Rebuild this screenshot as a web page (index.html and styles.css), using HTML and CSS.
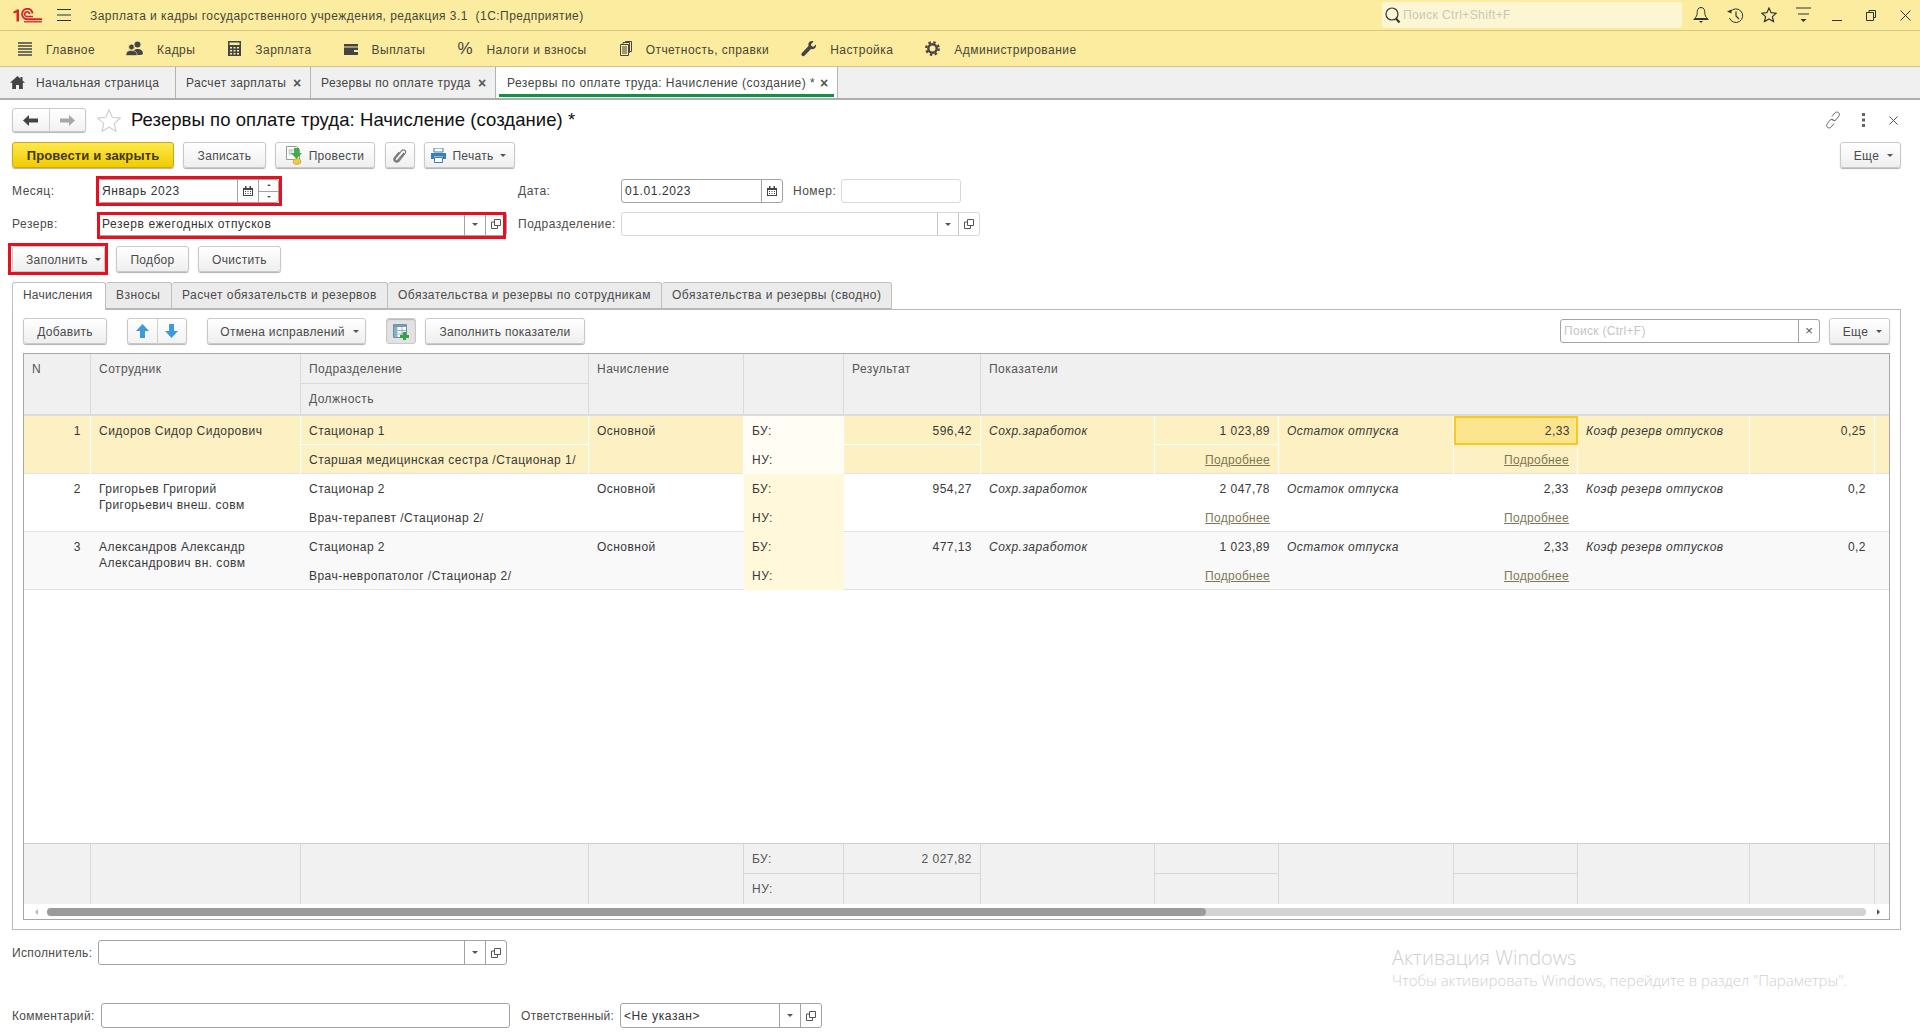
FILE: index.html
```html
<!DOCTYPE html>
<html lang="ru">
<head>
<meta charset="utf-8">
<title>Резервы по оплате труда</title>
<link rel="stylesheet" href="styles.css">
</head>
<body>
<svg class="defs" width="0" height="0">
  <symbol id="i-open" viewBox="0 0 10 10"><path d="M3.5 .5h6v6h-6zM3.5 3H.5v6.5h6V6.5" fill="none" stroke="currentColor"/></symbol>
  <symbol id="i-cal" viewBox="0 0 10 10"><path d="M0 2h10v8H0zM2 0h1.5v3H2zM6.500 0H8v3H6.500z" fill="#444"/><path d="M1 4h8v5H1z" fill="#fff"/><path d="M2 5h1v1H2zM4.500 5h1v1h-1zM7 5h1v1H7zM2 7h1v1H2zM4.500 7h1v1h-1zM7 7h1v1H7z" fill="#444"/></symbol>
</svg>

<header class="titlebar">
  <svg class="logo" width="30" height="15" viewBox="0 0 30 15"><path d="M0 4 4 1.500h2V13.500H3.500V4.500L1 5.500z" fill="#d8232a"/><path d="M19.500 5.500A5.200 5.200 0 1 0 14 11.200H29" fill="none" stroke="#d8232a" stroke-width="2"/><path d="M16.500 6.200A2.400 2.400 0 1 0 14 8.600H20" fill="none" stroke="#d8232a" stroke-width="1.500"/><path d="M11 13.800H29" stroke="#d8232a" stroke-width="1.300"/></svg>
  <svg class="burger" width="14" height="12" viewBox="0 0 14 12"><path d="M0 .5h14M0 6h14M0 11.500h14" stroke="#333" stroke-width="1"/></svg>
  <span class="app-title">Зарплата и кадры государственного учреждения, редакция 3.1&nbsp; (1С:Предприятие)</span>
  <div class="global-search">
    <svg width="16" height="17" viewBox="0 0 16 17"><circle cx="7" cy="7" r="6" fill="none" stroke="#333" stroke-width="1.200"/><path d="M11 11.500l3.500 4" stroke="#333" stroke-width="2"/></svg>
    <span>Поиск Ctrl+Shift+F</span>
  </div>
  <div class="sys-icons">
    <svg width="16" height="18" viewBox="0 0 16 18"><path d="M8 1.500c-3 0-3.800 2.500-3.800 5 0 3-1 4.500-2.700 6h13c-1.700-1.500-2.700-3-2.700-6 0-2.500-.8-5-3.800-5z" fill="none" stroke="#333"/><path d="M.5 13.500h15" stroke="#333"/><path d="M6 15h4l-2 2z" fill="#333"/></svg>
    <svg width="17" height="17" viewBox="0 0 17 17"><path d="M3.200 5A6.800 6.800 0 1 1 2.500 11" fill="none" stroke="#333"/><path d="M0 4.500l4.500-2v4z" fill="#333"/><path d="M9 4.500V9l3 3" fill="none" stroke="#333" stroke-width="1.200"/></svg>
    <svg width="16" height="16" viewBox="0 0 16 16"><path d="M8 1l2.100 4.700 5.100.5-3.800 3.400 1.100 5L8 12l-4.500 2.600 1.100-5L.8 6.200l5.100-.5z" fill="none" stroke="#333" stroke-width="1.200"/></svg>
    <svg width="15" height="16" viewBox="0 0 15 16"><path d="M0 1h15M2 7h11" stroke="#333"/><path d="M4.500 12h6l-3 3z" fill="#333"/></svg>
    <svg width="10" height="16" viewBox="0 0 10 16"><path d="M0 13.500h10" stroke="#333"/></svg>
    <svg width="10" height="11" viewBox="0 0 10 11"><path d="M3 2.500V.5h6.500v7H7.500M.5 2.500h7v8h-7z" fill="none" stroke="#333"/></svg>
    <svg width="11" height="11" viewBox="0 0 11 11"><path d="M.5.500l10 10M10.500.500l-10 10" stroke="#333"/></svg>
  </div>
</header>

<nav class="menubar">
  <a class="menu-item mi-main"><svg width="14" height="14" viewBox="0 0 14 14"><path d="M0 1h14M0 4h14M0 7h14M0 10h14M0 13h14" stroke="#444" stroke-width="1.600"/></svg><span>Главное</span></a>
  <a class="menu-item mi-staff"><svg width="17" height="15" viewBox="0 0 17 15"><circle cx="11.500" cy="3.500" r="3" fill="#444"/><path d="M7 14c0-4 1-6 4.500-6S17 10 17 13l-2 1z" fill="#444"/><circle cx="5.500" cy="6" r="2.800" fill="#444" stroke="#fbeca0" stroke-width=".6"/><path d="M0 14.500c0-3 1-5 5.500-5s5.500 2 5.500 5z" fill="#444" stroke="#fbeca0" stroke-width=".6"/></svg><span>Кадры</span></a>
  <a class="menu-item mi-pay"><svg width="13" height="15" viewBox="0 0 13 15"><path d="M0 0h13v15H0z" fill="#444"/><path d="M1.500 1.500h10v2.500h-10zM2 6h2v1.500H2zM5.500 6h2v1.500h-2zM9 6h2v1.500H9zM2 9h2v1.500H2zM5.500 9h2v1.500h-2zM9 9h2v1.500H9zM2 12h2v1.500H2zM5.500 12h2v1.500h-2zM9 12h2v1.500H9z" fill="#fbeca0"/></svg><span>Зарплата</span></a>
  <a class="menu-item mi-out"><svg width="14" height="12" viewBox="0 0 14 12"><path d="M0 1h14v2.500H0zM0 4.500h14V12H0z" fill="#444"/><path d="M10 7h4v2h-4z" fill="#fbeca0"/></svg><span>Выплаты</span></a>
  <a class="menu-item mi-tax"><b class="pct">%</b><span>Налоги и взносы</span></a>
  <a class="menu-item mi-rep"><svg width="12" height="15" viewBox="0 0 12 15"><path d="M.5 3.500h8v11h-8zM3 3V1.500h6.500v10H9M5.500 1V.5h6v10H10" fill="none" stroke="#444"/><path d="M2 6h5M2 8h5M2 10h5M2 12h5" stroke="#444"/></svg><span>Отчетность, справки</span></a>
  <a class="menu-item mi-set"><svg width="15" height="16" viewBox="0 0 15 16"><path d="M15 3.500l-2.500 2.300-2-.5-.5-2L12.500.5C10.500-.5 8 .5 7.500 2.500c-.3 1 0 2 0 2.500L.7 12.300c-.9 1 0 3 1.800 2.900.5 0 1-.3 1.200-.7L10 8c1 .3 2.500.2 3.500-.5 1.300-1 1.800-2.500 1.500-4z" fill="#444"/></svg><span>Настройка</span></a>
  <a class="menu-item mi-adm"><svg width="15" height="15" viewBox="0 0 15 15"><circle cx="7.500" cy="7.500" r="4.200" fill="none" stroke="#444" stroke-width="2.400"/><circle cx="7.500" cy="7.500" r="6.300" fill="none" stroke="#444" stroke-width="2.200" stroke-dasharray="2.500 2.450"/></svg><span>Администрирование</span></a>
</nav>

<div class="tabbar">
  <a class="wtab wtab-home"><svg width="15" height="13" viewBox="0 0 15 13"><path d="M7.500 0L0 6.800h2.200V13h3.800V9h3v4h3.800V6.800H15L12.500 4.500V1h-2v1.700z" fill="#444"/></svg><span>Начальная страница</span></a>
  <a class="wtab wtab-pay"><span>Расчет зарплаты</span><i class="x">×</i></a>
  <a class="wtab wtab-res"><span>Резервы по оплате труда</span><i class="x">×</i></a>
  <a class="wtab wtab-active"><span>Резервы по оплате труда: Начисление (создание) *</span><i class="x">×</i></a>
</div>

<main class="form">
  <div class="form-head">
    <div class="nav-pair">
      <button class="seg"><svg width="15" height="11" viewBox="0 0 15 11"><path d="M6 0L0 5.500 6 11V7.500h9v-4H6z" fill="#444"/></svg></button>
      <button class="seg"><svg width="15" height="11" viewBox="0 0 15 11"><path d="M9 0l6 5.500L9 11V7.500H0v-4h9z" fill="#a8a8a8"/></svg></button>
    </div>
    <svg class="fav" width="24" height="23" viewBox="0 0 24 23"><path d="M12 1l3.300 7.300 7.900.8-5.900 5.300 1.700 7.800L12 18.200 5 22.200l1.700-7.800L.8 9.100l7.900-.8z" fill="#fff" stroke="#cfcfcf" stroke-width="1.200"/></svg>
    <h1 class="doc-title">Резервы по оплате труда: Начисление (создание) *</h1>
    <div class="head-tools">
      <svg width="16" height="18" viewBox="0 0 16 18"><path d="M7 5.500l3-3.700c1.500-1.700 5-.3 4.300 2.300-.2.700-.6 1.300-1 1.800L11 8.800c-1.300 1.500-3.800 1-4.200-.8M9 12.500l-3 3.700C4.500 17.900 1 16.500 1.700 13.900c.2-.7.600-1.300 1-1.800L5 9.200c1.300-1.500 3.800-1 4.200.8" fill="none" stroke="#666"/></svg>
      <svg width="3" height="14" viewBox="0 0 3 14"><path d="M0 0h3v3H0zM0 5.500h3v3H0zM0 11h3v3H0z" fill="#666"/></svg>
      <svg width="9" height="9" viewBox="0 0 9 9"><path d="M.5.500l8 8M8.500.500l-8 8" stroke="#555"/></svg>
    </div>
  </div>

  <div class="cmdbar">
    <button class="btn btn-primary w-post-close">Провести и закрыть</button>
    <button class="btn w-save">Записать</button>
    <button class="btn w-post">
      <svg width="18" height="19" viewBox="0 0 18 19"><path d="M.5 .5h10l3 3v10H.5z" fill="#fff" stroke="#9a9a9a"/><path d="M2.500 4h5M2.500 6h4M2.500 8h4" stroke="#aaa"/><ellipse cx="11" cy="15.500" rx="4" ry="3" fill="#f2c64a" stroke="#c99a20" stroke-width=".6"/><path d="M8 2h5v5h3l-5.500 6L5 7h3z" fill="#3fae49"/></svg>
      Провести
    </button>
    <button class="btn w-clip"><svg width="14" height="16" viewBox="0 0 14 16"><path d="M11 5L5 12c-1.500 1.700-4 0-2.500-2l6-7.200c2-2.200 5.500 0 3.500 2.700L6 13c-2.500 2.800-6.800-.2-4.500-3.300L6 4" fill="none" stroke="#777" stroke-width="1.200"/></svg></button>
    <button class="btn w-print">
      <svg width="15" height="15" viewBox="0 0 15 15"><path d="M3 0h9v4H3z" fill="#fff" stroke="#3c7fb5"/><path d="M0 5h15v6h-3V8.500H3V11H0z" fill="#3c7fb5"/><path d="M3.500 9.500h8v5h-8z" fill="#fff" stroke="#3c7fb5"/></svg>
      Печать<i class="caret"></i>
    </button>
    <button class="btn w-more push-right">Еще<i class="caret"></i></button>
  </div>

  <div class="form-grid">
    <label class="lbl">Месяц:</label>
    <div class="field f-month">
      <span class="ftext">Январь 2023</span>
      <span class="fbtn"><svg class="ic-cal" width="10" height="10"><use href="#i-cal"/></svg></span>
      <span class="spin"><i class="up"></i><i class="down"></i></span>
      <span class="mark mark-month"></span>
    </div>
    <label class="lbl lbl-side">Дата:</label>
    <div class="side-pair">
      <div class="field f-date">
        <span class="ftext">01.01.2023</span>
        <span class="fbtn"><svg class="ic-cal" width="10" height="10"><use href="#i-cal"/></svg></span>
      </div>
      <label class="lbl lbl-num">Номер:</label>
      <div class="field field-off f-num"></div>
    </div>

    <label class="lbl">Резерв:</label>
    <div class="field">
      <span class="ftext">Резерв ежегодных отпусков</span>
      <span class="fbtn"><i class="caret"></i></span>
      <span class="fbtn"><svg class="ic-open" width="10" height="10"><use href="#i-open"/></svg></span>
      <span class="mark mark-reserve"></span>
    </div>
    <label class="lbl lbl-side">Подразделение:</label>
    <div class="field field-off">
      <span class="ftext"></span>
      <span class="fbtn"><i class="caret"></i></span>
      <span class="fbtn"><svg class="ic-open" width="10" height="10"><use href="#i-open"/></svg></span>
    </div>
  </div>

  <div class="fillbar">
    <button class="btn w-fill">Заполнить<i class="caret"></i><span class="mark mark-fill"></span></button>
    <button class="btn w-pick">Подбор</button>
    <button class="btn w-clear">Очистить</button>
  </div>

  <div class="ptabs">
    <a class="ptab ptab-active">Начисления</a>
    <a class="ptab">Взносы</a>
    <a class="ptab">Расчет обязательств и резервов</a>
    <a class="ptab">Обязательства и резервы по сотрудникам</a>
    <a class="ptab">Обязательства и резервы (сводно)</a>
  </div>

  <section class="panel">
    <div class="toolbar">
      <button class="btn w-add">Добавить</button>
      <div class="btn-pair">
        <button class="seg"><svg width="13" height="14" viewBox="0 0 13 14"><path d="M6.500 0L13 7H9v7H4V7H0z" fill="#3d9bdc"/></svg></button>
        <button class="seg"><svg width="13" height="14" viewBox="0 0 13 14"><path d="M6.500 14L13 7H9V0H4v7H0z" fill="#3d9bdc"/></svg></button>
      </div>
      <button class="btn w-undo">Отмена исправлений<i class="caret"></i></button>
      <button class="btn btn-down w-grid"><svg width="17" height="16" viewBox="0 0 17 16"><path d="M.5 .5h13v13H.5z" fill="#fff" stroke="#6b8e9e"/><path d="M1 1h3.500v12H1z" fill="#7fb2d0"/><path d="M1 .5h12.500v2.500H1z" fill="#6f9fb8"/><path d="M9 3v10M5 6.500h8M5 10h8" stroke="#9ab"/><path d="M10 8h3v3h3v3h-3v2h-3v-2H7v-3h3z" fill="#35a33f"/></svg></button>
      <button class="btn w-fillind">Заполнить показатели</button>
      <div class="field search push-right">
        <span class="ftext ph">Поиск (Ctrl+F)</span>
        <span class="fbtn fbtn-x">×</span>
      </div>
      <button class="btn w-more">Еще<i class="caret"></i></button>
    </div>

    <div class="tbl">
      <div class="thead cols">
        <div class="h span2">N</div>
        <div class="h span2">Сотрудник</div>
        <div class="h split">Подразделение</div>
        <div class="h span2">Начисление</div>
        <div class="h span2"></div>
        <div class="h span2">Результат</div>
        <div class="h span2 wide">Показатели</div>
        <div class="h">Должность</div>
      </div>

      <div class="trow cols sel">
        <div class="c span2 num">1</div>
        <div class="c span2">Сидоров Сидор Сидорович</div>
        <div class="c split">Стационар 1</div>
        <div class="c span2">Основной</div>
        <div class="c bu">БУ:</div>
        <div class="c split r">596,42</div>
        <div class="c span2 it">Сохр.заработок</div>
        <div class="c split r">1 023,89</div>
        <div class="c span2 it">Остаток отпуска</div>
        <div class="c split r cur">2,33</div>
        <div class="c span2 it">Коэф резерв отпусков</div>
        <div class="c span2 r">0,25</div>
        <div class="c span2 end"></div>
        <div class="c">Старшая медицинская сестра /Стационар 1/</div>
        <div class="c bu">НУ:</div>
        <div class="c"></div>
        <div class="c r"><a class="more">Подробнее</a></div>
        <div class="c r"><a class="more">Подробнее</a></div>
      </div>

      <div class="trow cols">
        <div class="c span2 num">2</div>
        <div class="c span2">Григорьев Григорий<br>Григорьевич внеш. совм</div>
        <div class="c">Стационар 2</div>
        <div class="c span2">Основной</div>
        <div class="c bu">БУ:</div>
        <div class="c r">954,27</div>
        <div class="c span2 it">Сохр.заработок</div>
        <div class="c r">2 047,78</div>
        <div class="c span2 it">Остаток отпуска</div>
        <div class="c r">2,33</div>
        <div class="c span2 it">Коэф резерв отпусков</div>
        <div class="c span2 r">0,2</div>
        <div class="c span2 end"></div>
        <div class="c">Врач-терапевт /Стационар 2/</div>
        <div class="c bu">НУ:</div>
        <div class="c"></div>
        <div class="c r"><a class="more">Подробнее</a></div>
        <div class="c r"><a class="more">Подробнее</a></div>
      </div>

      <div class="trow cols alt">
        <div class="c span2 num">3</div>
        <div class="c span2">Александров Александр<br>Александрович вн. совм</div>
        <div class="c">Стационар 2</div>
        <div class="c span2">Основной</div>
        <div class="c bu">БУ:</div>
        <div class="c r">477,13</div>
        <div class="c span2 it">Сохр.заработок</div>
        <div class="c r">1 023,89</div>
        <div class="c span2 it">Остаток отпуска</div>
        <div class="c r">2,33</div>
        <div class="c span2 it">Коэф резерв отпусков</div>
        <div class="c span2 r">0,2</div>
        <div class="c span2 end"></div>
        <div class="c">Врач-невропатолог /Стационар 2/</div>
        <div class="c bu">НУ:</div>
        <div class="c"></div>
        <div class="c r"><a class="more">Подробнее</a></div>
        <div class="c r"><a class="more">Подробнее</a></div>
      </div>

      <div class="tspace"></div>

      <div class="tfoot cols">
        <div class="f span2"></div>
        <div class="f span2"></div>
        <div class="f span2"></div>
        <div class="f span2"></div>
        <div class="f split">БУ:</div>
        <div class="f split r">2 027,82</div>
        <div class="f span2"></div>
        <div class="f split"></div>
        <div class="f span2"></div>
        <div class="f split"></div>
        <div class="f span2"></div>
        <div class="f span2"></div>
        <div class="f span2 end"></div>
        <div class="f">НУ:</div>
        <div class="f"></div>
        <div class="f"></div>
        <div class="f"></div>
      </div>

      <div class="hscroll">
        <i class="arr arr-l"></i>
        <div class="track"><div class="thumb"></div></div>
        <i class="arr arr-r"></i>
      </div>
    </div>
  </section>

  <div class="bottom-row exec-row">
    <label class="lbl">Исполнитель:</label>
    <div class="field f-wide">
      <span class="ftext"></span>
      <span class="fbtn"><i class="caret"></i></span>
      <span class="fbtn"><svg class="ic-open" width="10" height="10"><use href="#i-open"/></svg></span>
    </div>
  </div>

  <div class="bottom-row comment-row">
    <label class="lbl lbl-comment">Комментарий:</label>
    <div class="field f-comment"></div>
    <label class="lbl lbl-resp">Ответственный:</label>
    <div class="field f-resp">
      <span class="ftext">&lt;Не указан&gt;</span>
      <span class="fbtn"><i class="caret"></i></span>
      <span class="fbtn"><svg class="ic-open" width="10" height="10"><use href="#i-open"/></svg></span>
    </div>
  </div>
</main>

<aside class="watermark">
  <div class="wm-1">Активация Windows</div>
  <div class="wm-2">Чтобы активировать Windows, перейдите в раздел "Параметры".</div>
</aside>
</body>
</html>
```

FILE: styles.css
```css
* { box-sizing: border-box; }
html, body { margin: 0; height: 100%; }
body {
  width: 1920px; height: 1036px; overflow: hidden; position: relative;
  background: #fff; color: #444;
  font: 12px/16px "Liberation Sans", Arial, sans-serif;
  display: flex; flex-direction: column;
}
.defs { position: absolute; }
button { font: inherit; color: inherit; margin: 0; }
svg { display: block; flex: none; }

/* title bar */
.titlebar {
  height: 31px; flex: none; background: #fbeca0; border-bottom: 1px solid #d5c77f;
  display: flex; align-items: center; padding-left: 13px;
}
.burger { margin-left: 14px; }
.app-title { margin-left: 19px; padding-top: 2px; color: #4a4636; letter-spacing: .47px; white-space: nowrap; }
.global-search {
  margin-left: auto; width: 300px; height: 26px; background: #fdf6d2; border-radius: 3px;
  display: flex; align-items: center; padding-left: 3px; gap: 2px; color: #c9c6c0; letter-spacing: .4px;
}
.sys-icons {
  width: 238px; margin-right: -2px; margin-left: 2px;
  display: grid; grid-template-columns: repeat(7, 34px); justify-items: center; align-items: center;
}

/* menu */
.menubar {
  height: 36px; flex: none; background: #fbeca0; border-bottom: 1px solid #d0c48a;
  display: flex; align-items: center; padding-left: 18px;
}
.menu-item { display: flex; align-items: center; color: #4a4636; letter-spacing: .46px; white-space: nowrap; }
.menu-item span { padding-top: 2px; }
.menu-item svg, .pct { margin-right: 14px; }
.mi-main { margin-right: 31px; }
.mi-staff { margin-right: 33px; }
.mi-pay { margin-right: 32px; }
.mi-out { margin-right: 32px; }
.mi-tax { margin-right: 33px; }
.mi-rep { margin-right: 32px; }
.mi-set { margin-right: 32px; }
.pct { font-size: 17px; font-weight: 400; width: 15px; color: #444; letter-spacing: 0; }

/* window tabs */
.tabbar {
  height: 33px; flex: none; background: #f0f0f0; border-bottom: 2px solid #aeaeae;
  display: flex; align-items: stretch;
}
.wtab {
  display: flex; align-items: center; justify-content: space-between; padding: 0 8px 0 10px; border-right: 1px solid #b4b4b4;
  color: #444; white-space: nowrap; letter-spacing: .4px; flex: none;
}
.wtab span { padding-top: 1px; }
.wtab-home { width: 176px; justify-content: flex-start; }
.wtab-home svg { margin-right: 11px; }
.wtab-pay { width: 135px; }
.wtab-res { width: 185px; }
.x { font-style: normal; font-weight: 700; font-size: 14px; color: #555; width: 10px; text-align: center; letter-spacing: 0; }
.wtab-active { width: 342px; padding-left: 11px; background: #fff; position: relative; letter-spacing: .46px; }
.wtab-active::after { content: ""; position: absolute; left: 3px; right: 3px; bottom: 1px; height: 3px; background: #0e9248; }

/* form */
.form { flex: 1; padding: 8px 19px 0 12px; min-height: 0; }
.form-head { height: 24px; display: flex; align-items: center; }
.nav-pair, .btn-pair {
  display: flex; height: 24px; border: 1px solid #c8c8c8; border-radius: 3px;
  box-shadow: 0 1px 1px #b5b5b5; background: linear-gradient(#fff, #f2f2f2);
}
.nav-pair { width: 74px; }
.seg { flex: 1; border: 0; background: none; padding: 0; display: flex; align-items: center; justify-content: center; }
.seg + .seg { border-left: 1px solid #d0d0d0; }
.fav { margin-left: 11px; }
.doc-title { margin: 0 0 0 10px; font-size: 18.5px; font-weight: 400; line-height: 24px; color: #111; white-space: nowrap; letter-spacing: .07px; }
.head-tools {
  margin-left: auto; margin-right: -7px; width: 90px;
  display: grid; grid-template-columns: repeat(3, 30px); justify-items: center; align-items: center;
}

.btn {
  height: 26px; padding: 1px 0 0; display: inline-flex; align-items: center; justify-content: center; position: relative;
  border: 1px solid #c9c9c9; border-radius: 3px; background: linear-gradient(#fff, #efefef);
  box-shadow: 0 1px 1px #b0b0b0; color: #4a4a4a; white-space: nowrap; letter-spacing: .32px; flex: none;
}
.btn-primary { background: linear-gradient(#fde84e, #f2cc00); border-color: #c8ab14; color: #42390a; font-weight: 700; font-size: 13px; letter-spacing: .12px; }
.btn-down { background: #e2e2e2; box-shadow: inset 0 1px 1px #bbb; }
.caret { display: inline-block; width: 0; height: 0; border: 3px solid transparent; border-top: 3px solid #555; border-bottom: 0; margin-left: 8px; }
.push-right { margin-left: auto; }

.cmdbar { margin-top: 10px; display: flex; height: 26px; }
.w-post-close { width: 162px; margin-right: 9px; }
.w-save { width: 83px; margin-right: 9px; }
.w-post { width: 100px; margin-right: 10px; gap: 5px; }
.w-clip { width: 30px; margin-right: 9px; }
.w-print { width: 91px; gap: 6px; padding-right: 2px; }
.w-print .caret { margin-left: 0; }
.w-more { width: 61px; padding-left: 6px; }

.form-grid {
  margin-top: 11px; display: grid; grid-template-columns: 86px 409px 114px 359px;
  grid-auto-rows: 24px; row-gap: 9px; align-items: stretch;
}
.lbl { display: flex; align-items: center; color: #4a4a4a; letter-spacing: .5px; white-space: nowrap; }
.lbl-side { padding-left: 11px; }
.field {
  position: relative; display: flex; align-items: stretch; height: 24px; background: #fff;
  border: 1px solid #a3a3a3; border-radius: 3px; color: #333;
}
.field-off { border-color: #d8d8d8; }
.ftext { flex: 1; padding-left: 3px; display: flex; align-items: center; white-space: nowrap; letter-spacing: .6px; }
.fbtn { flex: none; width: 21px; border-left: 1px solid #a3a3a3; display: flex; align-items: center; justify-content: center; color: #555; }
.field-off .fbtn { border-left-color: #c4c4c4; }
.fbtn .caret { margin-left: 0; }
.spin { flex: none; width: 20px; border-left: 1px solid #a3a3a3; display: flex; flex-direction: column; }
.spin i { flex: 1; display: flex; align-items: center; justify-content: center; }
.spin .up { border-bottom: 1px solid #a3a3a3; }
.spin .up::before { content: ""; border: 2px solid transparent; border-top: 0; border-bottom: 2px solid #555; }
.spin .down::before { content: ""; border: 2px solid transparent; border-bottom: 0; border-top: 2px solid #555; }
.f-month { width: 181px; }
.side-pair { display: flex; align-items: stretch; }
.f-date { width: 162px; }
.f-num { width: 120px; }
.lbl-num { width: 58px; padding-left: 10px; }
.mark { position: absolute; border: 3px solid #e8101f; pointer-events: none; }
.mark-month { left: -3px; top: -4px; right: -4px; bottom: -4px; }
.mark-reserve { left: -2px; top: -1px; right: 0; bottom: -4px; }
.mark-fill { left: -5px; top: -4px; right: -4px; bottom: -4px; }

.fillbar { margin-top: 10px; display: flex; height: 26px; }
.w-fill { width: 93px; margin-right: 11px; justify-content: flex-start; padding-left: 13px; }
.w-fill .caret { margin-left: 7px; }
.w-pick { width: 73px; margin-right: 9px; }
.w-clear { width: 83px; }

.ptabs { margin-top: 10px; height: 27px; display: flex; position: relative; z-index: 1; }
.ptab {
  height: 27px; padding: 0 10px 2px; border: 1px solid #c0c0c0; border-left: 0; border-bottom: 1px solid #b5b5b5; border-radius: 3px 3px 0 0;
  background: #ebebeb; color: #4a4a4a; display: flex; align-items: center; white-space: nowrap; letter-spacing: .48px; flex: none;
}
.ptab:nth-child(1) { width: 94px; border-left: 1px solid #c0c0c0; }
.ptab:nth-child(2) { width: 66px; }
.ptab:nth-child(3) { width: 216px; }
.ptab:nth-child(4) { width: 274px; }
.ptab:nth-child(5) { width: 230px; }
.ptab-active { background: #fff; height: 28px; border-bottom: 0; letter-spacing: .2px; padding-bottom: 3px; }

.panel {
  border: 1px solid #b9b9b9; height: 621px; padding: 8px 10px 9px 10px; display: flex; flex-direction: column;
}
.toolbar { height: 26px; flex: none; display: flex; align-items: center; }
.w-add { width: 84px; margin-right: 20px; }
.btn-pair { width: 60px; height: 26px; margin-right: 20px; }
.w-undo { width: 159px; margin-right: 20px; padding-left: 6px; }
.w-grid { width: 30px; margin-right: 9px; }
.w-fillind { width: 160px; }
.search { width: 260px; margin-right: 9px; }
.ph { color: #c5c5c5; letter-spacing: .3px; }
.fbtn-x { font-size: 13px; }

.tbl {
  margin-top: 9px; flex: 1; min-height: 0; border: 1px solid #a8a8a8; display: flex; flex-direction: column;
  overflow: hidden; color: #383838;
}
.cols {
  display: grid; flex: none;
  grid-template-columns: 67px 210px 288px 155px 100px 137px 174px 124px 175px 124px 172px 125px 14px;
}
.thead { grid-template-rows: 30px 30px; background: #f0f0f0; border-bottom: 2px solid #dcdcdc; height: 62px; color: #555; }
.h, .c, .f { padding: 7px 8px 0; border-right: 1px solid #dadada; white-space: nowrap; letter-spacing: .46px; }
.span2 { grid-row: span 2; }
.wide { grid-column: span 7; border-right: 0; }
.h.split { border-bottom: 1px solid #dadada; }

.trow { grid-template-rows: 29px 29px; height: 58px; border-bottom: 1px solid #e2e2e2; }
.c { border-right-color: transparent; }
.num { text-align: right; padding-right: 9px; }
.r { text-align: right; }
.it { font-style: italic; }
.bu { background: #fff8da; }
.alt { background: #f9f9f9; }
.sel { background: #fdf0c2; }
.sel .c { border-right-color: #fff; }
.sel .split { border-bottom: 1px solid #fff; }
.sel .bu { background: #fffdf4; }
.sel .end { border-right: 0; }
.c.cur { background: #fde48f; border: 2px solid #f6c91f; padding: 5px 6px 0; }
.more { color: #7d7757; text-decoration: underline; letter-spacing: .3px; }
.tspace { flex: 1; min-height: 0; }

.tfoot { grid-template-rows: 30px 30px; background: #f1f1f1; border-top: 1px solid #cfcfcf; height: 61px; color: #555; }
.f { border-right-color: #d8d8d8; padding-top: 7px; }
.f.split { border-bottom: 1px solid #d8d8d8; }
.f.end { border-right: 0; }

.hscroll { height: 15px; flex: none; background: #fff; display: flex; align-items: center; padding: 0 9px 0 11px; }
.arr { width: 0; height: 0; border: 3px solid transparent; flex: none; }
.arr-l { border-left: 0; border-right: 3px solid #bbb; margin-right: 9px; }
.arr-r { border-right: 0; border-left: 3px solid #555; margin-left: 11px; }
.track { flex: 1; height: 8px; border-radius: 4px; background: #d2d2d2; }
.thumb { width: 1159px; height: 8px; border-radius: 4px; background: #9b9b9b; }

.bottom-row { display: flex; }
.exec-row { margin-top: 10px; }
.exec-row .lbl { width: 86px; letter-spacing: .36px; }
.f-wide { width: 409px; height: 25px; }
.comment-row { margin-top: 38px; }
.lbl-comment { width: 89px; letter-spacing: .3px; }
.f-comment { width: 409px; height: 25px; }
.lbl-resp { margin-left: 11px; width: 99px; letter-spacing: .3px; }
.f-resp { width: 202px; height: 25px; }

.watermark { position: absolute; left: 1392px; top: 945px; color: #cfcfcf; font-family: "Open Sans", sans-serif; font-weight: 300; white-space: nowrap; }
.wm-1 { font-size: 19.9px; line-height: 26px; }
.wm-2 { font-size: 14.95px; line-height: 18px; }
```
